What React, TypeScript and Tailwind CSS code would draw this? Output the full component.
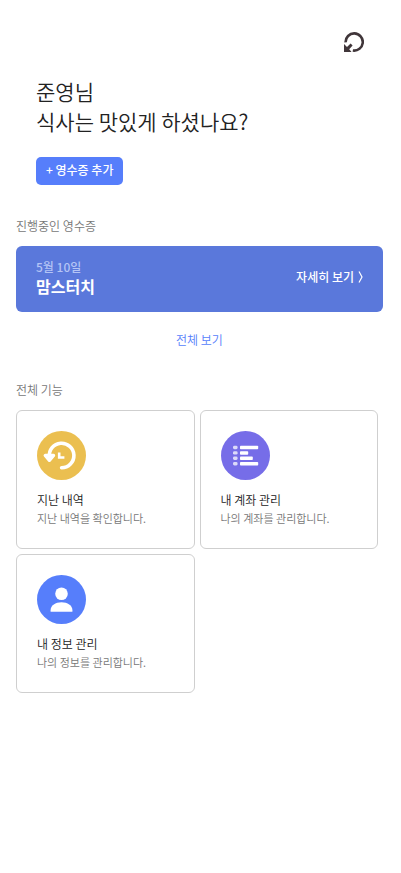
import type { ReactNode } from "react";

type Feature = {
  title: string;
  description: string;
  icon: ReactNode;
};

function HistoryIcon() {
  return (
    <svg viewBox="0 0 49 49" className="block size-[49px]" fill="none" aria-hidden="true">
      <circle cx="24.5" cy="24.5" r="24.5" fill="#ebbf50" />
      <path d="M12.4 26A12.3 12.3 0 1 1 24.6 36.8" stroke="#fff" strokeWidth="3.6" strokeLinecap="round" />
      <path d="M8.2 24.4h8.4l-4.2 5z" fill="#fff" stroke="#fff" strokeWidth="3.2" strokeLinejoin="round" />
      <path d="M22.2 21.4v5.1h5.2" stroke="#fff" strokeWidth="2.6" />
    </svg>
  );
}

function AccountIcon() {
  return (
    <svg viewBox="0 0 49 49" className="block size-[49px]" fill="#fff" aria-hidden="true">
      <circle cx="24.5" cy="24.5" r="24.5" fill="#766de8" />
      <g opacity="0.75">
        <rect x="12" y="14.8" width="4.6" height="3.4" rx="1.4" />
        <rect x="12" y="20.2" width="4.6" height="3.4" rx="1.4" />
        <rect x="12" y="25.6" width="4.6" height="3.4" rx="1.4" />
        <rect x="12" y="31" width="4.6" height="3.4" rx="1.4" />
      </g>
      <rect x="19" y="14.8" width="18.2" height="3.5" rx="0.8" />
      <rect x="19" y="20.2" width="8.2" height="3.5" rx="0.8" />
      <rect x="19" y="25.6" width="12.8" height="3.5" rx="0.8" />
      <rect x="19" y="31" width="18.2" height="3.5" rx="0.8" />
    </svg>
  );
}

function ProfileIcon() {
  return (
    <svg viewBox="0 0 49 49" className="block size-[49px]" fill="#fff" aria-hidden="true">
      <circle cx="24.5" cy="24.5" r="24.5" fill="#567efb" />
      <circle cx="24.5" cy="18.8" r="6.3" />
      <path d="M13.6 36.8v-1.6c0-4.8 4.9-7.9 10.9-7.9s10.9 3.1 10.9 7.9v1.6z" />
    </svg>
  );
}

const features: Feature[] = [
  { title: "지난 내역", description: "지난 내역을 확인합니다.", icon: <HistoryIcon /> },
  { title: "내 계좌 관리", description: "나의 계좌를 관리합니다.", icon: <AccountIcon /> },
  { title: "내 정보 관리", description: "나의 정보를 관리합니다.", icon: <ProfileIcon /> },
];

function FeatureCard({ title, description, icon }: Feature) {
  return (
    <a href="#" className="block rounded-md border border-[#cfcfcf] px-5 pt-5 pb-[21px]">
      {icon}
      <h3 className="mt-[11px] text-[12px] leading-[18px] font-[350] text-[#222]">{title}</h3>
      <p className="text-[11px] leading-[18px] text-[#777]">{description}</p>
    </a>
  );
}

export default function App() {
  return (
    <div className="min-h-screen bg-white pt-8 pr-[18px] pl-4 font-['Noto_Sans_CJK_KR',sans-serif] font-[350]">
      <header className="pr-[19px] pl-5">
        <div className="flex justify-end">
          <button type="button" aria-label="새로고침" className="size-5">
            <svg viewBox="0 0 20 20" className="block size-5" fill="none" aria-hidden="true">
              <path d="M1.6 10.4A8.6 8.6 0 1 1 8.8 18.5" stroke="#40363a" strokeWidth="2.6" />
              <path d="M0 12v8h7.6l-2.4-2.8 3.4-3.8-2-2L3 14.9z" fill="#40363a" />
            </svg>
          </button>
        </div>
        <h1 className="mt-6 text-[21px] leading-[30px] font-[350] text-[#222]">
          준영님
          <br />
          식사는 맛있게 하셨나요?
        </h1>
        <button
          type="button"
          className="mt-[21px] flex h-7 items-center rounded-[5px] bg-[#567efb] px-[10px] pb-0.5 text-[12px] font-medium text-white"
        >
          + 영수증 추가
        </button>
      </header>

      <section className="mt-8">
        <h2 className="text-[12px] leading-[18px] font-[350] text-[#777]">진행중인 영수증</h2>
        <a href="#" className="mt-[11px] flex items-center justify-between rounded-md bg-[#5a78db] px-5 pt-3 pb-4 text-white">
          <span className="flex flex-col">
            <span className="text-[12px] leading-[18px] font-medium text-[#b4c4f5]">5월 10일</span>
            <strong className="text-[16px] leading-5 font-bold">맘스터치</strong>
          </span>
          <span className="flex items-center gap-1 text-[12px] font-medium">
            자세히 보기
            <svg viewBox="0 0 5 12" className="h-3 w-[5px]" fill="none" stroke="#fff" aria-hidden="true">
              <path d="M1 .5l3 5.5-3 5.5" strokeWidth="1.2" />
            </svg>
          </span>
        </a>
        <div className="mt-[19px] text-center text-[12px] leading-[18px]">
          <a href="#" className="text-[#567efb]">
            전체 보기
          </a>
        </div>
      </section>

      <section className="mt-8">
        <h2 className="text-[12px] leading-[18px] font-[350] text-[#777]">전체 기능</h2>
        <div className="mt-[11px] grid grid-cols-2 gap-[5px] pr-[5px]">
          {features.map((feature) => (
            <FeatureCard key={feature.title} {...feature} />
          ))}
        </div>
      </section>
    </div>
  );
}
